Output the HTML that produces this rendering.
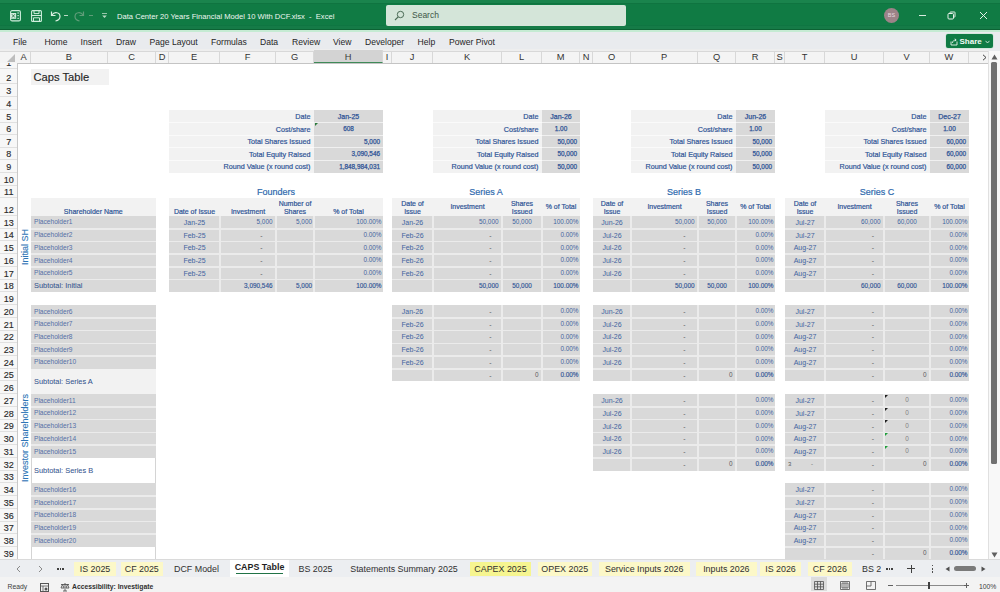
<!DOCTYPE html>
<html><head><meta charset="utf-8">
<style>
*{margin:0;padding:0;box-sizing:border-box}
html,body{width:1000px;height:592px;overflow:hidden;background:#fff;font-family:"Liberation Sans",sans-serif}
.a{position:absolute}
.t{position:absolute;display:flex;align-items:center;font-size:7px;color:#2f5496;white-space:nowrap;line-height:1;overflow:visible}
.t.g{color:#595959}
.t.g2{color:#7f7f7f}
.t.ph{color:#5470a6}
.t.sb{color:#34558f;-webkit-text-stroke:0.05px #34558f}
.t.hd{text-align:center;line-height:8.2px;-webkit-text-stroke:0.2px #2f5496}
.t.lb{-webkit-text-stroke:0.2px #2f5496}
.t.v{-webkit-text-stroke:0.25px #2f5496}
.t.b{-webkit-text-stroke:0.15px #2f5496}
.t.d{color:#4264a0}
.tt{position:absolute;display:flex;align-items:center;font-size:9px;color:#2f6aae;white-space:nowrap;-webkit-text-stroke:0.2px #2f6aae}
.cap{position:absolute;font-size:11.2px;color:#262626;line-height:15px;white-space:nowrap;margin-top:0px;-webkit-text-stroke:0.15px #262626}
.rot{position:absolute;display:flex;align-items:center;justify-content:center}
.rot span{display:block;transform:rotate(-90deg);white-space:nowrap;font-size:9px;color:#2e75b6;-webkit-text-stroke:0.1px #2e75b6}
#title{position:absolute;left:0;top:0;width:1000px;height:31.5px;background:linear-gradient(180deg,#1a844d 0,#1a844d 3px,#0f7440 3px,#0f7440 4.5px,#107b44 4.5px,#107b44 25px,#0c7340 25px,#157b47 26.5px,#157b47 29px,#0c6334 29.5px,#0c6334 30.5px,#c5ebd3 30.5px)}
#menu{position:absolute;left:0;top:31.5px;width:1000px;height:19.5px;background:#e9ebee}
.mi{position:absolute;top:1.5px;height:19.5px;line-height:19.5px;font-size:8.6px;color:#262626;white-space:nowrap}
#colhdr{position:absolute;left:0;top:48.5px;width:988px;height:15px;background:linear-gradient(180deg,#eeeeee 0,#eeeeee 2px,#d8d8d8 2px,#d8d8d8 3px,#f4f4f4 3px);border-bottom:1px solid #c4c4c4}
.cn{position:absolute;top:3px;height:11px;line-height:11px;text-align:center;font-size:9.3px;color:#333;border-right:1px solid #d8d8d8}
.cn.sel{background:#d3d3d3;border-bottom:1.5px solid #3f8a58;color:#3a3a3a;top:1.5px;height:12.5px;line-height:14px}
#rowhdr{position:absolute;left:0;top:63px;width:17.5px;height:497px;background:#f7f7f7;border-right:1px solid #c8c8c8}
.rn{position:absolute;left:0;margin-top:-63px;overflow:hidden;width:16.5px;font-size:9px;line-height:9px;color:#2b2b2b;-webkit-text-stroke:0.15px #2b2b2b;border-bottom:1px solid #e0e0e0;display:flex;align-items:flex-end;justify-content:center;padding-left:1px}
#vscroll{position:absolute;left:988px;top:50.5px;width:12px;height:509px;background:#f8f8f8;border-left:1px solid #e0e0e0}
#tabs{position:absolute;left:0;top:558.5px;width:1000px;height:18px;background:#eceef1;border-top:1px solid #dadada}
.tab{position:absolute;top:2px;height:14px;line-height:14px;font-size:8.9px;color:#303030;white-space:nowrap;text-align:center}
.tab.y{background:#fcf8c8}
.tab.yy{background:#f6f590}
#status{position:absolute;left:0;top:576.5px;width:1000px;height:15.5px;background:#f3f3f3}
.st{position:absolute;top:3px;height:14.5px;line-height:14.5px;font-size:6.8px;color:#404040;white-space:nowrap}
</style></head><body>
<div id="title">
  <svg style="position:absolute;left:10px;top:10px" width="11" height="11.5" viewBox="0 0 11 11.5">
    <rect x="0.6" y="0.6" width="9.8" height="10.3" rx="1.5" fill="none" stroke="#cfeedd" stroke-width="1.1"/>
    <rect x="0.6" y="3" width="5.6" height="5.8" fill="#cfeedd"/>
    <path d="M2 4.3 L4.8 7.5 M4.8 4.3 L2 7.5" stroke="#2c6e46" stroke-width="0.9"/>
    <path d="M7.3 3 H9 M7.3 5.7 H9 M7.3 8.3 H9" stroke="#cfeedd" stroke-width="1"/>
  </svg>
  <svg style="position:absolute;left:31px;top:9.5px" width="11" height="12" viewBox="0 0 11 12">
    <rect x="0.6" y="0.6" width="9.8" height="10.8" rx="1" fill="none" stroke="#cfeedd" stroke-width="1.1"/>
    <path d="M0.6 5.5 H10.4 M3 0.6 V3.6 H8 V0.6 M2.5 11.4 V7.8 H8.5 V11.4" fill="none" stroke="#cfeedd" stroke-width="1"/>
  </svg>
  <svg style="position:absolute;left:49px;top:9px" width="13" height="13" viewBox="0 0 13 13">
    <path d="M2.5 2.5 V6.5 H6.5" fill="none" stroke="#d9efe0" stroke-width="1.2"/>
    <path d="M3 6 C5 2.5 11 3 11 7.5 C11 10 9 11.5 6.5 12" fill="none" stroke="#d9efe0" stroke-width="1.2"/>
  </svg>
  <div style="position:absolute;left:64px;top:15px;width:4px;height:1px;background:#b9d9c4"></div>
  <svg style="position:absolute;left:73px;top:9px" width="13" height="13" viewBox="0 0 13 13">
    <path d="M10.5 2.5 V6.5 H6.5" fill="none" stroke="#5f9c78" stroke-width="1.2"/>
    <path d="M10 6 C8 2.5 2 3 2 7.5 C2 10 4 11.5 6.5 12" fill="none" stroke="#5f9c78" stroke-width="1.2"/>
  </svg>
  <div style="position:absolute;left:89px;top:15px;width:4px;height:1px;background:#5f9c78"></div>
  <svg style="position:absolute;left:101px;top:12px" width="7" height="7" viewBox="0 0 7 7">
    <path d="M1 1.5 H6" stroke="#b9d9c4" stroke-width="0.8"/><path d="M1.2 3.5 L3.5 6 L5.8 3.5 Z" fill="#b9d9c4"/>
  </svg>
  <div style="position:absolute;left:117px;top:9.7px;height:13px;line-height:13px;font-size:7.6px;color:#eef7f1;white-space:nowrap">Data Center 20 Years Financial Model 10 With DCF.xlsx&nbsp; -&nbsp; Excel</div>
  <div style="position:absolute;left:385.5px;top:5px;width:240px;height:21px;background:#d4e5d9;border-radius:2px"></div>
  <svg style="position:absolute;left:394px;top:10px" width="11" height="11" viewBox="0 0 11 11">
    <circle cx="6.5" cy="4.5" r="3.2" fill="none" stroke="#4a6b55" stroke-width="1"/>
    <path d="M4.2 6.8 L1 10" stroke="#4a6b55" stroke-width="1.1"/>
  </svg>
  <div style="position:absolute;left:412px;top:9px;height:13px;line-height:13px;font-size:8.5px;color:#3d5747">Search</div>
  <div style="position:absolute;left:884px;top:8px;width:15px;height:15px;border-radius:50%;background:#9c8388"></div>
  <div style="position:absolute;left:884px;top:8px;width:15px;height:15px;line-height:15px;text-align:center;font-size:5.5px;color:#e8dde0">BS</div>
  <div style="position:absolute;left:918.5px;top:15px;width:7px;height:1px;background:#d8ebdf"></div>
  <svg style="position:absolute;left:947px;top:11px" width="9" height="9" viewBox="0 0 9 9">
    <rect x="1" y="2.5" width="5.5" height="5.5" rx="1" fill="none" stroke="#e6f2ea" stroke-width="1"/>
    <path d="M3 2.5 V1.5 Q3 1 3.5 1 H7.5 Q8 1 8 1.5 V5.5 Q8 6 7.5 6 H6.5" fill="none" stroke="#e6f2ea" stroke-width="1"/>
  </svg>
  <svg style="position:absolute;left:979px;top:11px" width="9" height="9" viewBox="0 0 9 9">
    <path d="M1 1 L8 8 M8 1 L1 8" stroke="#e6f2ea" stroke-width="1"/>
  </svg>
</div>
<div id="menu">
  <div class="mi" style="left:13px">File</div>
  <div class="mi" style="left:44.5px">Home</div>
  <div class="mi" style="left:80.5px">Insert</div>
  <div class="mi" style="left:116px">Draw</div>
  <div class="mi" style="left:149.5px">Page Layout</div>
  <div class="mi" style="left:211px">Formulas</div>
  <div class="mi" style="left:260px">Data</div>
  <div class="mi" style="left:292px">Review</div>
  <div class="mi" style="left:333px">View</div>
  <div class="mi" style="left:365px">Developer</div>
  <div class="mi" style="left:417.5px">Help</div>
  <div class="mi" style="left:449px">Power Pivot</div>
  <div style="position:absolute;left:946px;top:2px;width:46.5px;height:14.5px;background:#0f7b44;border-radius:2px;box-shadow:0 0 0 0.5px #bfe5cc"></div>
  <svg style="position:absolute;left:950px;top:6px" width="8" height="8" viewBox="0 0 8 8">
    <path d="M1 3.5 V7 H7 V3.5" fill="none" stroke="#e8f3ec" stroke-width="0.9"/>
    <path d="M2.5 5 C2.5 3 4 2 6 2 M4.8 0.8 L6.2 2 L4.8 3.2" fill="none" stroke="#e8f3ec" stroke-width="0.9"/>
  </svg>
  <div style="position:absolute;left:959.5px;top:2px;height:15px;line-height:15px;font-size:8px;font-weight:bold;color:#f4fbf6">Share</div>
  <svg style="position:absolute;left:985px;top:8px" width="5" height="4" viewBox="0 0 5 4"><path d="M0.5 0.8 L2.5 3 L4.5 0.8" fill="none" stroke="#e8f3ec" stroke-width="0.8"/></svg>
</div>
<div id="grid" style="position:absolute;left:0;top:0;width:1000px;height:592px">
<div class="a" style="left:169.00px;top:110.00px;width:145.00px;height:62.50px;background:#f2f2f2"></div>
<div class="a" style="left:314.00px;top:110.00px;width:69.00px;height:62.50px;background:#d9d9d9"></div>
<div class="t lb" style="left:169.00px;top:110.60px;width:145.00px;height:12.50px;justify-content:flex-end;padding-right:3.5px;font-size:7.2px;">Date</div>
<div class="t v" style="left:314.00px;top:110.60px;width:69.00px;height:12.50px;justify-content:center;font-size:7px;">Jan-25</div>
<div class="a" style="left:169.00px;top:122.00px;width:214.00px;height:1.00px;background:#ffffff;opacity:.6"></div>
<div class="t lb" style="left:169.00px;top:123.10px;width:145.00px;height:12.50px;justify-content:flex-end;padding-right:3.5px;font-size:7.2px;">Cost/share</div>
<div class="t v" style="left:314.00px;top:123.10px;width:69.00px;height:12.50px;justify-content:center;font-size:6.4px;">608</div>
<div class="a" style="left:169.00px;top:134.50px;width:214.00px;height:1.00px;background:#ffffff;opacity:.6"></div>
<div class="t lb" style="left:169.00px;top:135.60px;width:145.00px;height:12.50px;justify-content:flex-end;padding-right:3.5px;font-size:7.2px;">Total Shares Issued</div>
<div class="t v" style="left:314.00px;top:135.60px;width:69.00px;height:12.50px;justify-content:flex-end;padding-right:3px;font-size:6.4px;">5,000</div>
<div class="a" style="left:169.00px;top:147.00px;width:214.00px;height:1.00px;background:#ffffff;opacity:.6"></div>
<div class="t lb" style="left:169.00px;top:148.10px;width:145.00px;height:12.50px;justify-content:flex-end;padding-right:3.5px;font-size:7.2px;">Total Equity Raised</div>
<div class="t v" style="left:314.00px;top:148.10px;width:69.00px;height:12.50px;justify-content:flex-end;padding-right:3px;font-size:6.4px;">3,090,546</div>
<div class="a" style="left:169.00px;top:159.50px;width:214.00px;height:1.00px;background:#ffffff;opacity:.6"></div>
<div class="t lb" style="left:169.00px;top:160.60px;width:145.00px;height:12.50px;justify-content:flex-end;padding-right:3.5px;font-size:7.2px;">Round Value (x round cost)</div>
<div class="t v" style="left:314.00px;top:160.60px;width:69.00px;height:12.50px;justify-content:flex-end;padding-right:3px;font-size:6.4px;">1,848,984,031</div>
<div class="a" style="left:433.00px;top:110.00px;width:109.00px;height:62.50px;background:#f2f2f2"></div>
<div class="a" style="left:542.00px;top:110.00px;width:38.00px;height:62.50px;background:#d9d9d9"></div>
<div class="t lb" style="left:433.00px;top:110.60px;width:109.00px;height:12.50px;justify-content:flex-end;padding-right:3.5px;font-size:7.2px;">Date</div>
<div class="t v" style="left:542.00px;top:110.60px;width:38.00px;height:12.50px;justify-content:center;font-size:7px;">Jan-26</div>
<div class="a" style="left:433.00px;top:122.00px;width:147.00px;height:1.00px;background:#ffffff;opacity:.6"></div>
<div class="t lb" style="left:433.00px;top:123.10px;width:109.00px;height:12.50px;justify-content:flex-end;padding-right:3.5px;font-size:7.2px;">Cost/share</div>
<div class="t v" style="left:542.00px;top:123.10px;width:38.00px;height:12.50px;justify-content:center;font-size:6.4px;">1.00</div>
<div class="a" style="left:433.00px;top:134.50px;width:147.00px;height:1.00px;background:#ffffff;opacity:.6"></div>
<div class="t lb" style="left:433.00px;top:135.60px;width:109.00px;height:12.50px;justify-content:flex-end;padding-right:3.5px;font-size:7.2px;">Total Shares Issued</div>
<div class="t v" style="left:542.00px;top:135.60px;width:38.00px;height:12.50px;justify-content:flex-end;padding-right:3px;font-size:6.4px;">50,000</div>
<div class="a" style="left:433.00px;top:147.00px;width:147.00px;height:1.00px;background:#ffffff;opacity:.6"></div>
<div class="t lb" style="left:433.00px;top:148.10px;width:109.00px;height:12.50px;justify-content:flex-end;padding-right:3.5px;font-size:7.2px;">Total Equity Raised</div>
<div class="t v" style="left:542.00px;top:148.10px;width:38.00px;height:12.50px;justify-content:flex-end;padding-right:3px;font-size:6.4px;">50,000</div>
<div class="a" style="left:433.00px;top:159.50px;width:147.00px;height:1.00px;background:#ffffff;opacity:.6"></div>
<div class="t lb" style="left:433.00px;top:160.60px;width:109.00px;height:12.50px;justify-content:flex-end;padding-right:3.5px;font-size:7.2px;">Round Value (x round cost)</div>
<div class="t v" style="left:542.00px;top:160.60px;width:38.00px;height:12.50px;justify-content:flex-end;padding-right:3px;font-size:6.4px;">50,000</div>
<div class="a" style="left:631.00px;top:110.00px;width:105.00px;height:62.50px;background:#f2f2f2"></div>
<div class="a" style="left:736.00px;top:110.00px;width:39.00px;height:62.50px;background:#d9d9d9"></div>
<div class="t lb" style="left:631.00px;top:110.60px;width:105.00px;height:12.50px;justify-content:flex-end;padding-right:3.5px;font-size:7.2px;">Date</div>
<div class="t v" style="left:736.00px;top:110.60px;width:39.00px;height:12.50px;justify-content:center;font-size:7px;">Jun-26</div>
<div class="a" style="left:631.00px;top:122.00px;width:144.00px;height:1.00px;background:#ffffff;opacity:.6"></div>
<div class="t lb" style="left:631.00px;top:123.10px;width:105.00px;height:12.50px;justify-content:flex-end;padding-right:3.5px;font-size:7.2px;">Cost/share</div>
<div class="t v" style="left:736.00px;top:123.10px;width:39.00px;height:12.50px;justify-content:center;font-size:6.4px;">1.00</div>
<div class="a" style="left:631.00px;top:134.50px;width:144.00px;height:1.00px;background:#ffffff;opacity:.6"></div>
<div class="t lb" style="left:631.00px;top:135.60px;width:105.00px;height:12.50px;justify-content:flex-end;padding-right:3.5px;font-size:7.2px;">Total Shares Issued</div>
<div class="t v" style="left:736.00px;top:135.60px;width:39.00px;height:12.50px;justify-content:flex-end;padding-right:3px;font-size:6.4px;">50,000</div>
<div class="a" style="left:631.00px;top:147.00px;width:144.00px;height:1.00px;background:#ffffff;opacity:.6"></div>
<div class="t lb" style="left:631.00px;top:148.10px;width:105.00px;height:12.50px;justify-content:flex-end;padding-right:3.5px;font-size:7.2px;">Total Equity Raised</div>
<div class="t v" style="left:736.00px;top:148.10px;width:39.00px;height:12.50px;justify-content:flex-end;padding-right:3px;font-size:6.4px;">50,000</div>
<div class="a" style="left:631.00px;top:159.50px;width:144.00px;height:1.00px;background:#ffffff;opacity:.6"></div>
<div class="t lb" style="left:631.00px;top:160.60px;width:105.00px;height:12.50px;justify-content:flex-end;padding-right:3.5px;font-size:7.2px;">Round Value (x round cost)</div>
<div class="t v" style="left:736.00px;top:160.60px;width:39.00px;height:12.50px;justify-content:flex-end;padding-right:3px;font-size:6.4px;">50,000</div>
<div class="a" style="left:825.00px;top:110.00px;width:105.00px;height:62.50px;background:#f2f2f2"></div>
<div class="a" style="left:930.00px;top:110.00px;width:39.00px;height:62.50px;background:#d9d9d9"></div>
<div class="t lb" style="left:825.00px;top:110.60px;width:105.00px;height:12.50px;justify-content:flex-end;padding-right:3.5px;font-size:7.2px;">Date</div>
<div class="t v" style="left:930.00px;top:110.60px;width:39.00px;height:12.50px;justify-content:center;font-size:7px;">Dec-27</div>
<div class="a" style="left:825.00px;top:122.00px;width:144.00px;height:1.00px;background:#ffffff;opacity:.6"></div>
<div class="t lb" style="left:825.00px;top:123.10px;width:105.00px;height:12.50px;justify-content:flex-end;padding-right:3.5px;font-size:7.2px;">Cost/share</div>
<div class="t v" style="left:930.00px;top:123.10px;width:39.00px;height:12.50px;justify-content:center;font-size:6.4px;">1.00</div>
<div class="a" style="left:825.00px;top:134.50px;width:144.00px;height:1.00px;background:#ffffff;opacity:.6"></div>
<div class="t lb" style="left:825.00px;top:135.60px;width:105.00px;height:12.50px;justify-content:flex-end;padding-right:3.5px;font-size:7.2px;">Total Shares Issued</div>
<div class="t v" style="left:930.00px;top:135.60px;width:39.00px;height:12.50px;justify-content:flex-end;padding-right:3px;font-size:6.4px;">60,000</div>
<div class="a" style="left:825.00px;top:147.00px;width:144.00px;height:1.00px;background:#ffffff;opacity:.6"></div>
<div class="t lb" style="left:825.00px;top:148.10px;width:105.00px;height:12.50px;justify-content:flex-end;padding-right:3.5px;font-size:7.2px;">Total Equity Raised</div>
<div class="t v" style="left:930.00px;top:148.10px;width:39.00px;height:12.50px;justify-content:flex-end;padding-right:3px;font-size:6.4px;">60,000</div>
<div class="a" style="left:825.00px;top:159.50px;width:144.00px;height:1.00px;background:#ffffff;opacity:.6"></div>
<div class="t lb" style="left:825.00px;top:160.60px;width:105.00px;height:12.50px;justify-content:flex-end;padding-right:3.5px;font-size:7.2px;">Round Value (x round cost)</div>
<div class="t v" style="left:930.00px;top:160.60px;width:39.00px;height:12.50px;justify-content:flex-end;padding-right:3px;font-size:6.4px;">60,000</div>
<svg class="a" style="left:314.50px;top:123.00px" width="3" height="3" viewBox="0 0 3 3"><path d="M0 0 H3 L0 3 Z" fill="#2a7a3a"/></svg>
<div class="tt" style="left:169.00px;top:186.00px;width:214.00px;height:12.80px;justify-content:center;">Founders</div>
<div class="tt" style="left:392.00px;top:186.00px;width:188.00px;height:12.80px;justify-content:center;">Series A</div>
<div class="tt" style="left:593.00px;top:186.00px;width:182.00px;height:12.80px;justify-content:center;">Series B</div>
<div class="tt" style="left:785.00px;top:186.00px;width:184.00px;height:12.80px;justify-content:center;">Series C</div>
<div class="a" style="left:30.50px;top:198.30px;width:125.50px;height:17.70px;background:#f2f2f2"></div>
<div class="t" style="left:30.5px;top:198.3px;width:125.5px;height:17.70px;justify-content:center;align-items:flex-end;padding-bottom:0.5px;-webkit-text-stroke:0.2px #2f5496">Shareholder Name</div>
<div class="a" style="left:30.50px;top:216.00px;width:125.50px;height:63.65px;background:#d9d9d9"></div>
<div class="t ph" style="left:30.50px;top:216.40px;width:125.50px;height:12.73px;justify-content:flex-start;padding-left:3.5px;font-size:6.6px;">Placeholder1</div>
<div class="a" style="left:30.50px;top:227.93px;width:125.50px;height:1.60px;background:#ebebeb"></div>
<div class="t ph" style="left:30.50px;top:229.13px;width:125.50px;height:12.73px;justify-content:flex-start;padding-left:3.5px;font-size:6.6px;">Placeholder2</div>
<div class="a" style="left:30.50px;top:240.66px;width:125.50px;height:1.60px;background:#ebebeb"></div>
<div class="t ph" style="left:30.50px;top:241.86px;width:125.50px;height:12.73px;justify-content:flex-start;padding-left:3.5px;font-size:6.6px;">Placeholder3</div>
<div class="a" style="left:30.50px;top:253.39px;width:125.50px;height:1.60px;background:#ebebeb"></div>
<div class="t ph" style="left:30.50px;top:254.59px;width:125.50px;height:12.73px;justify-content:flex-start;padding-left:3.5px;font-size:6.6px;">Placeholder4</div>
<div class="a" style="left:30.50px;top:266.12px;width:125.50px;height:1.60px;background:#ebebeb"></div>
<div class="t ph" style="left:30.50px;top:267.32px;width:125.50px;height:12.73px;justify-content:flex-start;padding-left:3.5px;font-size:6.6px;">Placeholder5</div>
<div class="a" style="left:30.50px;top:279.65px;width:125.50px;height:12.73px;background:#d9d9d9"></div>
<div class="a" style="left:30.50px;top:278.85px;width:125.50px;height:1.60px;background:#ebebeb"></div>
<div class="t sb" style="left:30.50px;top:279.65px;width:125.50px;height:12.73px;justify-content:flex-start;padding-left:3.5px;font-size:7.4px;">Subtotal: Initial</div>
<div class="a" style="left:30.50px;top:305.11px;width:125.50px;height:63.65px;background:#d9d9d9"></div>
<div class="t ph" style="left:30.50px;top:305.51px;width:125.50px;height:12.73px;justify-content:flex-start;padding-left:3.5px;font-size:6.6px;">Placeholder6</div>
<div class="a" style="left:30.50px;top:317.04px;width:125.50px;height:1.60px;background:#ebebeb"></div>
<div class="t ph" style="left:30.50px;top:318.24px;width:125.50px;height:12.73px;justify-content:flex-start;padding-left:3.5px;font-size:6.6px;">Placeholder7</div>
<div class="a" style="left:30.50px;top:329.77px;width:125.50px;height:1.60px;background:#ebebeb"></div>
<div class="t ph" style="left:30.50px;top:330.97px;width:125.50px;height:12.73px;justify-content:flex-start;padding-left:3.5px;font-size:6.6px;">Placeholder8</div>
<div class="a" style="left:30.50px;top:342.50px;width:125.50px;height:1.60px;background:#ebebeb"></div>
<div class="t ph" style="left:30.50px;top:343.70px;width:125.50px;height:12.73px;justify-content:flex-start;padding-left:3.5px;font-size:6.6px;">Placeholder9</div>
<div class="a" style="left:30.50px;top:355.23px;width:125.50px;height:1.60px;background:#ebebeb"></div>
<div class="t ph" style="left:30.50px;top:356.43px;width:125.50px;height:12.73px;justify-content:flex-start;padding-left:3.5px;font-size:6.6px;">Placeholder10</div>
<div class="a" style="left:30.50px;top:368.76px;width:125.50px;height:25.46px;background:#f2f2f2"></div>
<div class="t sb" style="left:30.50px;top:368.76px;width:125.50px;height:25.46px;justify-content:flex-start;padding-left:3.5px;font-size:7.4px;">Subtotal: Series A</div>
<div class="a" style="left:30.50px;top:394.22px;width:125.50px;height:63.65px;background:#d9d9d9"></div>
<div class="t ph" style="left:30.50px;top:394.62px;width:125.50px;height:12.73px;justify-content:flex-start;padding-left:3.5px;font-size:6.6px;">Placeholder11</div>
<div class="a" style="left:30.50px;top:406.15px;width:125.50px;height:1.60px;background:#ebebeb"></div>
<div class="t ph" style="left:30.50px;top:407.35px;width:125.50px;height:12.73px;justify-content:flex-start;padding-left:3.5px;font-size:6.6px;">Placeholder12</div>
<div class="a" style="left:30.50px;top:418.88px;width:125.50px;height:1.60px;background:#ebebeb"></div>
<div class="t ph" style="left:30.50px;top:420.08px;width:125.50px;height:12.73px;justify-content:flex-start;padding-left:3.5px;font-size:6.6px;">Placeholder13</div>
<div class="a" style="left:30.50px;top:431.61px;width:125.50px;height:1.60px;background:#ebebeb"></div>
<div class="t ph" style="left:30.50px;top:432.81px;width:125.50px;height:12.73px;justify-content:flex-start;padding-left:3.5px;font-size:6.6px;">Placeholder14</div>
<div class="a" style="left:30.50px;top:444.34px;width:125.50px;height:1.60px;background:#ebebeb"></div>
<div class="t ph" style="left:30.50px;top:445.54px;width:125.50px;height:12.73px;justify-content:flex-start;padding-left:3.5px;font-size:6.6px;">Placeholder15</div>
<div class="a" style="left:30.50px;top:457.87px;width:125.50px;height:25.46px;background:#ffffff;border-left:1px solid #d4d4d4;border-right:1px solid #d4d4d4"></div>
<div class="t sb" style="left:30.50px;top:457.87px;width:125.50px;height:25.46px;justify-content:flex-start;padding-left:3.5px;font-size:7.4px;">Subtotal: Series B</div>
<div class="a" style="left:30.50px;top:483.33px;width:125.50px;height:63.65px;background:#d9d9d9"></div>
<div class="t ph" style="left:30.50px;top:483.73px;width:125.50px;height:12.73px;justify-content:flex-start;padding-left:3.5px;font-size:6.6px;">Placeholder16</div>
<div class="a" style="left:30.50px;top:495.26px;width:125.50px;height:1.60px;background:#ebebeb"></div>
<div class="t ph" style="left:30.50px;top:496.46px;width:125.50px;height:12.73px;justify-content:flex-start;padding-left:3.5px;font-size:6.6px;">Placeholder17</div>
<div class="a" style="left:30.50px;top:507.99px;width:125.50px;height:1.60px;background:#ebebeb"></div>
<div class="t ph" style="left:30.50px;top:509.19px;width:125.50px;height:12.73px;justify-content:flex-start;padding-left:3.5px;font-size:6.6px;">Placeholder18</div>
<div class="a" style="left:30.50px;top:520.72px;width:125.50px;height:1.60px;background:#ebebeb"></div>
<div class="t ph" style="left:30.50px;top:521.92px;width:125.50px;height:12.73px;justify-content:flex-start;padding-left:3.5px;font-size:6.6px;">Placeholder19</div>
<div class="a" style="left:30.50px;top:533.45px;width:125.50px;height:1.60px;background:#ebebeb"></div>
<div class="t ph" style="left:30.50px;top:534.65px;width:125.50px;height:12.73px;justify-content:flex-start;padding-left:3.5px;font-size:6.6px;">Placeholder20</div>
<div class="a" style="left:30.50px;top:546.98px;width:125.50px;height:13.02px;background:#ffffff;border-left:1px solid #d4d4d4;border-right:1px solid #d4d4d4"></div>
<div class="rot" style="left:18.0px;top:200.3px;width:13.0px;height:94.07999999999998px"><span>Initial SH</span></div>
<div class="rot" style="left:19.0px;top:398px;width:13.0px;height:80px"><span>Investor Shareholders</span></div>
<div class="a" style="left:169.00px;top:198.30px;width:214.00px;height:17.70px;background:#f2f2f2"></div>
<div class="t hd" style="left:169px;top:198.30px;width:51px;height:17.70px;justify-content:center;align-items:flex-end;padding-bottom:-0.5px">Date of Issue</div>
<div class="t hd" style="left:220px;top:198.30px;width:56px;height:17.70px;justify-content:center;align-items:flex-end;padding-bottom:-0.5px">Investment</div>
<div class="t hd" style="left:276px;top:198.30px;width:38px;height:17.70px;justify-content:center;align-items:flex-end;padding-bottom:-0.5px">Number of<br>Shares</div>
<div class="t hd" style="left:314px;top:198.30px;width:69px;height:17.70px;justify-content:center;align-items:flex-end;padding-bottom:-0.5px">% of Total</div>
<div class="a" style="left:392.00px;top:198.30px;width:188.00px;height:17.70px;background:#f2f2f2"></div>
<div class="t hd" style="left:392px;top:198.30px;width:41px;height:17.70px;justify-content:center;align-items:flex-end;padding-bottom:-0.5px">Date of<br>Issue</div>
<div class="t hd" style="left:433px;top:198.30px;width:69px;height:17.70px;justify-content:center;align-items:center;padding-bottom:-1px">Investment</div>
<div class="t hd" style="left:502px;top:198.30px;width:40px;height:17.70px;justify-content:center;align-items:flex-end;padding-bottom:-0.5px">Shares<br>Issued</div>
<div class="t hd" style="left:542px;top:198.30px;width:38px;height:17.70px;justify-content:center;align-items:center;padding-bottom:-1px">% of Total</div>
<div class="a" style="left:593.00px;top:198.30px;width:182.00px;height:17.70px;background:#f2f2f2"></div>
<div class="t hd" style="left:593px;top:198.30px;width:38px;height:17.70px;justify-content:center;align-items:flex-end;padding-bottom:-0.5px">Date of<br>Issue</div>
<div class="t hd" style="left:631px;top:198.30px;width:67px;height:17.70px;justify-content:center;align-items:center;padding-bottom:-1px">Investment</div>
<div class="t hd" style="left:698px;top:198.30px;width:38px;height:17.70px;justify-content:center;align-items:flex-end;padding-bottom:-0.5px">Shares<br>Issued</div>
<div class="t hd" style="left:736px;top:198.30px;width:39px;height:17.70px;justify-content:center;align-items:center;padding-bottom:-1px">% of Total</div>
<div class="a" style="left:785.00px;top:198.30px;width:184.00px;height:17.70px;background:#f2f2f2"></div>
<div class="t hd" style="left:785px;top:198.30px;width:40px;height:17.70px;justify-content:center;align-items:flex-end;padding-bottom:-0.5px">Date of<br>Issue</div>
<div class="t hd" style="left:825px;top:198.30px;width:59px;height:17.70px;justify-content:center;align-items:center;padding-bottom:-1px">Investment</div>
<div class="t hd" style="left:884px;top:198.30px;width:46px;height:17.70px;justify-content:center;align-items:flex-end;padding-bottom:-0.5px">Shares<br>Issued</div>
<div class="t hd" style="left:930px;top:198.30px;width:39px;height:17.70px;justify-content:center;align-items:center;padding-bottom:-1px">% of Total</div>
<div class="a" style="left:169.00px;top:216.00px;width:214.00px;height:76.38px;background:#d9d9d9"></div>
<div class="a" style="left:169.00px;top:227.93px;width:214.00px;height:1.60px;background:#ebebeb"></div>
<div class="a" style="left:169.00px;top:240.66px;width:214.00px;height:1.60px;background:#ebebeb"></div>
<div class="a" style="left:169.00px;top:253.39px;width:214.00px;height:1.60px;background:#ebebeb"></div>
<div class="a" style="left:169.00px;top:266.12px;width:214.00px;height:1.60px;background:#ebebeb"></div>
<div class="a" style="left:169.00px;top:278.85px;width:214.00px;height:1.60px;background:#ebebeb"></div>
<div class="a" style="left:219.20px;top:216.00px;width:1.60px;height:76.38px;background:#ebebeb"></div>
<div class="a" style="left:275.20px;top:216.00px;width:1.60px;height:76.38px;background:#ebebeb"></div>
<div class="a" style="left:313.20px;top:216.00px;width:1.60px;height:76.38px;background:#ebebeb"></div>
<div class="t d" style="left:169.00px;top:216.00px;width:51.00px;height:12.73px;justify-content:center;font-size:7.0px;">Jan-25</div>
<div class="t d" style="left:220.00px;top:216.00px;width:56.00px;height:12.73px;justify-content:flex-end;padding-right:3.5px;font-size:6.4px;">5,000</div>
<div class="t d" style="left:276.00px;top:216.00px;width:38.00px;height:12.73px;justify-content:flex-end;padding-right:2px;font-size:6.4px;">5,000</div>
<div class="t d" style="left:314.00px;top:216.00px;width:69.00px;height:12.73px;justify-content:flex-end;padding-right:1.5px;font-size:6.4px;">100.00%</div>
<div class="t d" style="left:169.00px;top:228.73px;width:51.00px;height:12.73px;justify-content:center;font-size:7.0px;">Feb-25</div>
<div class="t g" style="left:220.00px;top:228.73px;width:56.00px;height:12.73px;justify-content:flex-end;padding-right:13.5px;font-size:7px;">-</div>
<div class="t d" style="left:314.00px;top:228.73px;width:69.00px;height:12.73px;justify-content:flex-end;padding-right:1.5px;font-size:6.4px;">0.00%</div>
<div class="t d" style="left:169.00px;top:241.46px;width:51.00px;height:12.73px;justify-content:center;font-size:7.0px;">Feb-25</div>
<div class="t g" style="left:220.00px;top:241.46px;width:56.00px;height:12.73px;justify-content:flex-end;padding-right:13.5px;font-size:7px;">-</div>
<div class="t d" style="left:314.00px;top:241.46px;width:69.00px;height:12.73px;justify-content:flex-end;padding-right:1.5px;font-size:6.4px;">0.00%</div>
<div class="t d" style="left:169.00px;top:254.19px;width:51.00px;height:12.73px;justify-content:center;font-size:7.0px;">Feb-25</div>
<div class="t g" style="left:220.00px;top:254.19px;width:56.00px;height:12.73px;justify-content:flex-end;padding-right:13.5px;font-size:7px;">-</div>
<div class="t d" style="left:314.00px;top:254.19px;width:69.00px;height:12.73px;justify-content:flex-end;padding-right:1.5px;font-size:6.4px;">0.00%</div>
<div class="t d" style="left:169.00px;top:266.92px;width:51.00px;height:12.73px;justify-content:center;font-size:7.0px;">Feb-25</div>
<div class="t g" style="left:220.00px;top:266.92px;width:56.00px;height:12.73px;justify-content:flex-end;padding-right:13.5px;font-size:7px;">-</div>
<div class="t d" style="left:314.00px;top:266.92px;width:69.00px;height:12.73px;justify-content:flex-end;padding-right:1.5px;font-size:6.4px;">0.00%</div>
<div class="t b" style="left:220.00px;top:279.65px;width:56.00px;height:12.73px;justify-content:flex-end;padding-right:3.5px;font-size:6.4px;">3,090,546</div>
<div class="t b" style="left:276.00px;top:279.65px;width:38.00px;height:12.73px;justify-content:flex-end;padding-right:2px;font-size:6.4px;">5,000</div>
<div class="t b" style="left:314.00px;top:279.65px;width:69.00px;height:12.73px;justify-content:flex-end;padding-right:1.5px;font-size:6.4px;">100.00%</div>
<div class="a" style="left:392.00px;top:216.00px;width:188.00px;height:76.38px;background:#d9d9d9"></div>
<div class="a" style="left:392.00px;top:227.93px;width:188.00px;height:1.60px;background:#ebebeb"></div>
<div class="a" style="left:392.00px;top:240.66px;width:188.00px;height:1.60px;background:#ebebeb"></div>
<div class="a" style="left:392.00px;top:253.39px;width:188.00px;height:1.60px;background:#ebebeb"></div>
<div class="a" style="left:392.00px;top:266.12px;width:188.00px;height:1.60px;background:#ebebeb"></div>
<div class="a" style="left:392.00px;top:278.85px;width:188.00px;height:1.60px;background:#ebebeb"></div>
<div class="a" style="left:432.20px;top:216.00px;width:1.60px;height:76.38px;background:#ebebeb"></div>
<div class="a" style="left:501.20px;top:216.00px;width:1.60px;height:76.38px;background:#ebebeb"></div>
<div class="a" style="left:541.20px;top:216.00px;width:1.60px;height:76.38px;background:#ebebeb"></div>
<div class="t d" style="left:392.00px;top:216.00px;width:41.00px;height:12.73px;justify-content:center;font-size:7.0px;">Jan-26</div>
<div class="t d" style="left:433.00px;top:216.00px;width:69.00px;height:12.73px;justify-content:flex-end;padding-right:3.5px;font-size:6.4px;">50,000</div>
<div class="t d" style="left:502.00px;top:216.00px;width:40.00px;height:12.73px;justify-content:center;font-size:6.4px;">50,000</div>
<div class="t d" style="left:542.00px;top:216.00px;width:38.00px;height:12.73px;justify-content:flex-end;padding-right:1.5px;font-size:6.4px;">100.00%</div>
<div class="t d" style="left:392.00px;top:228.73px;width:41.00px;height:12.73px;justify-content:center;font-size:7.0px;">Feb-26</div>
<div class="t g" style="left:433.00px;top:228.73px;width:69.00px;height:12.73px;justify-content:flex-end;padding-right:10.5px;font-size:7px;">-</div>
<div class="t d" style="left:542.00px;top:228.73px;width:38.00px;height:12.73px;justify-content:flex-end;padding-right:1.5px;font-size:6.4px;">0.00%</div>
<div class="t d" style="left:392.00px;top:241.46px;width:41.00px;height:12.73px;justify-content:center;font-size:7.0px;">Feb-26</div>
<div class="t g" style="left:433.00px;top:241.46px;width:69.00px;height:12.73px;justify-content:flex-end;padding-right:10.5px;font-size:7px;">-</div>
<div class="t d" style="left:542.00px;top:241.46px;width:38.00px;height:12.73px;justify-content:flex-end;padding-right:1.5px;font-size:6.4px;">0.00%</div>
<div class="t d" style="left:392.00px;top:254.19px;width:41.00px;height:12.73px;justify-content:center;font-size:7.0px;">Feb-26</div>
<div class="t g" style="left:433.00px;top:254.19px;width:69.00px;height:12.73px;justify-content:flex-end;padding-right:10.5px;font-size:7px;">-</div>
<div class="t d" style="left:542.00px;top:254.19px;width:38.00px;height:12.73px;justify-content:flex-end;padding-right:1.5px;font-size:6.4px;">0.00%</div>
<div class="t d" style="left:392.00px;top:266.92px;width:41.00px;height:12.73px;justify-content:center;font-size:7.0px;">Feb-26</div>
<div class="t g" style="left:433.00px;top:266.92px;width:69.00px;height:12.73px;justify-content:flex-end;padding-right:10.5px;font-size:7px;">-</div>
<div class="t d" style="left:542.00px;top:266.92px;width:38.00px;height:12.73px;justify-content:flex-end;padding-right:1.5px;font-size:6.4px;">0.00%</div>
<div class="t b" style="left:433.00px;top:279.65px;width:69.00px;height:12.73px;justify-content:flex-end;padding-right:3.5px;font-size:6.4px;">50,000</div>
<div class="t b" style="left:502.00px;top:279.65px;width:40.00px;height:12.73px;justify-content:center;font-size:6.4px;">50,000</div>
<div class="t b" style="left:542.00px;top:279.65px;width:38.00px;height:12.73px;justify-content:flex-end;padding-right:1.5px;font-size:6.4px;">100.00%</div>
<div class="a" style="left:593.00px;top:216.00px;width:182.00px;height:76.38px;background:#d9d9d9"></div>
<div class="a" style="left:593.00px;top:227.93px;width:182.00px;height:1.60px;background:#ebebeb"></div>
<div class="a" style="left:593.00px;top:240.66px;width:182.00px;height:1.60px;background:#ebebeb"></div>
<div class="a" style="left:593.00px;top:253.39px;width:182.00px;height:1.60px;background:#ebebeb"></div>
<div class="a" style="left:593.00px;top:266.12px;width:182.00px;height:1.60px;background:#ebebeb"></div>
<div class="a" style="left:593.00px;top:278.85px;width:182.00px;height:1.60px;background:#ebebeb"></div>
<div class="a" style="left:630.20px;top:216.00px;width:1.60px;height:76.38px;background:#ebebeb"></div>
<div class="a" style="left:697.20px;top:216.00px;width:1.60px;height:76.38px;background:#ebebeb"></div>
<div class="a" style="left:735.20px;top:216.00px;width:1.60px;height:76.38px;background:#ebebeb"></div>
<div class="t d" style="left:593.00px;top:216.00px;width:38.00px;height:12.73px;justify-content:center;font-size:7.0px;">Jun-26</div>
<div class="t d" style="left:631.00px;top:216.00px;width:67.00px;height:12.73px;justify-content:flex-end;padding-right:3.5px;font-size:6.4px;">50,000</div>
<div class="t d" style="left:698.00px;top:216.00px;width:38.00px;height:12.73px;justify-content:center;font-size:6.4px;">50,000</div>
<div class="t d" style="left:736.00px;top:216.00px;width:39.00px;height:12.73px;justify-content:flex-end;padding-right:1.5px;font-size:6.4px;">100.00%</div>
<div class="t d" style="left:593.00px;top:228.73px;width:38.00px;height:12.73px;justify-content:center;font-size:7.0px;">Jul-26</div>
<div class="t g" style="left:631.00px;top:228.73px;width:67.00px;height:12.73px;justify-content:flex-end;padding-right:12.5px;font-size:7px;">-</div>
<div class="t d" style="left:736.00px;top:228.73px;width:39.00px;height:12.73px;justify-content:flex-end;padding-right:1.5px;font-size:6.4px;">0.00%</div>
<div class="t d" style="left:593.00px;top:241.46px;width:38.00px;height:12.73px;justify-content:center;font-size:7.0px;">Jul-26</div>
<div class="t g" style="left:631.00px;top:241.46px;width:67.00px;height:12.73px;justify-content:flex-end;padding-right:12.5px;font-size:7px;">-</div>
<div class="t d" style="left:736.00px;top:241.46px;width:39.00px;height:12.73px;justify-content:flex-end;padding-right:1.5px;font-size:6.4px;">0.00%</div>
<div class="t d" style="left:593.00px;top:254.19px;width:38.00px;height:12.73px;justify-content:center;font-size:7.0px;">Jul-26</div>
<div class="t g" style="left:631.00px;top:254.19px;width:67.00px;height:12.73px;justify-content:flex-end;padding-right:12.5px;font-size:7px;">-</div>
<div class="t d" style="left:736.00px;top:254.19px;width:39.00px;height:12.73px;justify-content:flex-end;padding-right:1.5px;font-size:6.4px;">0.00%</div>
<div class="t d" style="left:593.00px;top:266.92px;width:38.00px;height:12.73px;justify-content:center;font-size:7.0px;">Jul-26</div>
<div class="t g" style="left:631.00px;top:266.92px;width:67.00px;height:12.73px;justify-content:flex-end;padding-right:12.5px;font-size:7px;">-</div>
<div class="t d" style="left:736.00px;top:266.92px;width:39.00px;height:12.73px;justify-content:flex-end;padding-right:1.5px;font-size:6.4px;">0.00%</div>
<div class="t b" style="left:631.00px;top:279.65px;width:67.00px;height:12.73px;justify-content:flex-end;padding-right:3.5px;font-size:6.4px;">50,000</div>
<div class="t b" style="left:698.00px;top:279.65px;width:38.00px;height:12.73px;justify-content:center;font-size:6.4px;">50,000</div>
<div class="t b" style="left:736.00px;top:279.65px;width:39.00px;height:12.73px;justify-content:flex-end;padding-right:1.5px;font-size:6.4px;">100.00%</div>
<div class="a" style="left:785.00px;top:216.00px;width:184.00px;height:76.38px;background:#d9d9d9"></div>
<div class="a" style="left:785.00px;top:227.93px;width:184.00px;height:1.60px;background:#ebebeb"></div>
<div class="a" style="left:785.00px;top:240.66px;width:184.00px;height:1.60px;background:#ebebeb"></div>
<div class="a" style="left:785.00px;top:253.39px;width:184.00px;height:1.60px;background:#ebebeb"></div>
<div class="a" style="left:785.00px;top:266.12px;width:184.00px;height:1.60px;background:#ebebeb"></div>
<div class="a" style="left:785.00px;top:278.85px;width:184.00px;height:1.60px;background:#ebebeb"></div>
<div class="a" style="left:824.20px;top:216.00px;width:1.60px;height:76.38px;background:#ebebeb"></div>
<div class="a" style="left:883.20px;top:216.00px;width:1.60px;height:76.38px;background:#ebebeb"></div>
<div class="a" style="left:929.20px;top:216.00px;width:1.60px;height:76.38px;background:#ebebeb"></div>
<div class="t d" style="left:785.00px;top:216.00px;width:40.00px;height:12.73px;justify-content:center;font-size:7.0px;">Jul-27</div>
<div class="t d" style="left:825.00px;top:216.00px;width:59.00px;height:12.73px;justify-content:flex-end;padding-right:3.5px;font-size:6.4px;">60,000</div>
<div class="t d" style="left:884.00px;top:216.00px;width:46.00px;height:12.73px;justify-content:center;font-size:6.4px;">60,000</div>
<div class="t d" style="left:930.00px;top:216.00px;width:39.00px;height:12.73px;justify-content:flex-end;padding-right:1.5px;font-size:6.4px;">100.00%</div>
<div class="t d" style="left:785.00px;top:228.73px;width:40.00px;height:12.73px;justify-content:center;font-size:7.0px;">Jul-27</div>
<div class="t g" style="left:825.00px;top:228.73px;width:59.00px;height:12.73px;justify-content:flex-end;padding-right:10px;font-size:7px;">-</div>
<div class="t d" style="left:930.00px;top:228.73px;width:39.00px;height:12.73px;justify-content:flex-end;padding-right:1.5px;font-size:6.4px;">0.00%</div>
<div class="t d" style="left:785.00px;top:241.46px;width:40.00px;height:12.73px;justify-content:center;font-size:7.0px;">Aug-27</div>
<div class="t g" style="left:825.00px;top:241.46px;width:59.00px;height:12.73px;justify-content:flex-end;padding-right:10px;font-size:7px;">-</div>
<div class="t d" style="left:930.00px;top:241.46px;width:39.00px;height:12.73px;justify-content:flex-end;padding-right:1.5px;font-size:6.4px;">0.00%</div>
<div class="t d" style="left:785.00px;top:254.19px;width:40.00px;height:12.73px;justify-content:center;font-size:7.0px;">Aug-27</div>
<div class="t g" style="left:825.00px;top:254.19px;width:59.00px;height:12.73px;justify-content:flex-end;padding-right:10px;font-size:7px;">-</div>
<div class="t d" style="left:930.00px;top:254.19px;width:39.00px;height:12.73px;justify-content:flex-end;padding-right:1.5px;font-size:6.4px;">0.00%</div>
<div class="t d" style="left:785.00px;top:266.92px;width:40.00px;height:12.73px;justify-content:center;font-size:7.0px;">Aug-27</div>
<div class="t g" style="left:825.00px;top:266.92px;width:59.00px;height:12.73px;justify-content:flex-end;padding-right:10px;font-size:7px;">-</div>
<div class="t d" style="left:930.00px;top:266.92px;width:39.00px;height:12.73px;justify-content:flex-end;padding-right:1.5px;font-size:6.4px;">0.00%</div>
<div class="t b" style="left:825.00px;top:279.65px;width:59.00px;height:12.73px;justify-content:flex-end;padding-right:3.5px;font-size:6.4px;">60,000</div>
<div class="t b" style="left:884.00px;top:279.65px;width:46.00px;height:12.73px;justify-content:center;font-size:6.4px;">60,000</div>
<div class="t b" style="left:930.00px;top:279.65px;width:39.00px;height:12.73px;justify-content:flex-end;padding-right:1.5px;font-size:6.4px;">100.00%</div>
<div class="a" style="left:392.00px;top:305.11px;width:188.00px;height:76.38px;background:#d9d9d9"></div>
<div class="a" style="left:392.00px;top:317.04px;width:188.00px;height:1.60px;background:#ebebeb"></div>
<div class="a" style="left:392.00px;top:329.77px;width:188.00px;height:1.60px;background:#ebebeb"></div>
<div class="a" style="left:392.00px;top:342.50px;width:188.00px;height:1.60px;background:#ebebeb"></div>
<div class="a" style="left:392.00px;top:355.23px;width:188.00px;height:1.60px;background:#ebebeb"></div>
<div class="a" style="left:392.00px;top:367.96px;width:188.00px;height:1.60px;background:#ebebeb"></div>
<div class="a" style="left:432.20px;top:305.11px;width:1.60px;height:76.38px;background:#ebebeb"></div>
<div class="a" style="left:501.20px;top:305.11px;width:1.60px;height:76.38px;background:#ebebeb"></div>
<div class="a" style="left:541.20px;top:305.11px;width:1.60px;height:76.38px;background:#ebebeb"></div>
<div class="t d" style="left:392.00px;top:305.11px;width:41.00px;height:12.73px;justify-content:center;font-size:7.0px;">Jan-26</div>
<div class="t g" style="left:433.00px;top:305.11px;width:69.00px;height:12.73px;justify-content:flex-end;padding-right:10.5px;font-size:7px;">-</div>
<div class="t d" style="left:542.00px;top:305.11px;width:38.00px;height:12.73px;justify-content:flex-end;padding-right:1.5px;font-size:6.4px;">0.00%</div>
<div class="t d" style="left:392.00px;top:317.84px;width:41.00px;height:12.73px;justify-content:center;font-size:7.0px;">Feb-26</div>
<div class="t g" style="left:433.00px;top:317.84px;width:69.00px;height:12.73px;justify-content:flex-end;padding-right:10.5px;font-size:7px;">-</div>
<div class="t d" style="left:542.00px;top:317.84px;width:38.00px;height:12.73px;justify-content:flex-end;padding-right:1.5px;font-size:6.4px;">0.00%</div>
<div class="t d" style="left:392.00px;top:330.57px;width:41.00px;height:12.73px;justify-content:center;font-size:7.0px;">Feb-26</div>
<div class="t g" style="left:433.00px;top:330.57px;width:69.00px;height:12.73px;justify-content:flex-end;padding-right:10.5px;font-size:7px;">-</div>
<div class="t d" style="left:542.00px;top:330.57px;width:38.00px;height:12.73px;justify-content:flex-end;padding-right:1.5px;font-size:6.4px;">0.00%</div>
<div class="t d" style="left:392.00px;top:343.30px;width:41.00px;height:12.73px;justify-content:center;font-size:7.0px;">Feb-26</div>
<div class="t g" style="left:433.00px;top:343.30px;width:69.00px;height:12.73px;justify-content:flex-end;padding-right:10.5px;font-size:7px;">-</div>
<div class="t d" style="left:542.00px;top:343.30px;width:38.00px;height:12.73px;justify-content:flex-end;padding-right:1.5px;font-size:6.4px;">0.00%</div>
<div class="t d" style="left:392.00px;top:356.03px;width:41.00px;height:12.73px;justify-content:center;font-size:7.0px;">Feb-26</div>
<div class="t g" style="left:433.00px;top:356.03px;width:69.00px;height:12.73px;justify-content:flex-end;padding-right:10.5px;font-size:7px;">-</div>
<div class="t d" style="left:542.00px;top:356.03px;width:38.00px;height:12.73px;justify-content:flex-end;padding-right:1.5px;font-size:6.4px;">0.00%</div>
<div class="t g" style="left:433.00px;top:368.76px;width:69.00px;height:12.73px;justify-content:flex-end;padding-right:10.5px;font-size:7px;">-</div>
<div class="t g" style="left:502.00px;top:368.76px;width:40.00px;height:12.73px;justify-content:flex-end;padding-right:3.5px;font-size:6.4px;">0</div>
<div class="t b" style="left:542.00px;top:368.76px;width:38.00px;height:12.73px;justify-content:flex-end;padding-right:1.5px;font-size:6.4px;">0.00%</div>
<div class="a" style="left:593.00px;top:305.11px;width:182.00px;height:76.38px;background:#d9d9d9"></div>
<div class="a" style="left:593.00px;top:317.04px;width:182.00px;height:1.60px;background:#ebebeb"></div>
<div class="a" style="left:593.00px;top:329.77px;width:182.00px;height:1.60px;background:#ebebeb"></div>
<div class="a" style="left:593.00px;top:342.50px;width:182.00px;height:1.60px;background:#ebebeb"></div>
<div class="a" style="left:593.00px;top:355.23px;width:182.00px;height:1.60px;background:#ebebeb"></div>
<div class="a" style="left:593.00px;top:367.96px;width:182.00px;height:1.60px;background:#ebebeb"></div>
<div class="a" style="left:630.20px;top:305.11px;width:1.60px;height:76.38px;background:#ebebeb"></div>
<div class="a" style="left:697.20px;top:305.11px;width:1.60px;height:76.38px;background:#ebebeb"></div>
<div class="a" style="left:735.20px;top:305.11px;width:1.60px;height:76.38px;background:#ebebeb"></div>
<div class="t d" style="left:593.00px;top:305.11px;width:38.00px;height:12.73px;justify-content:center;font-size:7.0px;">Jun-26</div>
<div class="t g" style="left:631.00px;top:305.11px;width:67.00px;height:12.73px;justify-content:flex-end;padding-right:12.5px;font-size:7px;">-</div>
<div class="t d" style="left:736.00px;top:305.11px;width:39.00px;height:12.73px;justify-content:flex-end;padding-right:1.5px;font-size:6.4px;">0.00%</div>
<div class="t d" style="left:593.00px;top:317.84px;width:38.00px;height:12.73px;justify-content:center;font-size:7.0px;">Jul-26</div>
<div class="t g" style="left:631.00px;top:317.84px;width:67.00px;height:12.73px;justify-content:flex-end;padding-right:12.5px;font-size:7px;">-</div>
<div class="t d" style="left:736.00px;top:317.84px;width:39.00px;height:12.73px;justify-content:flex-end;padding-right:1.5px;font-size:6.4px;">0.00%</div>
<div class="t d" style="left:593.00px;top:330.57px;width:38.00px;height:12.73px;justify-content:center;font-size:7.0px;">Jul-26</div>
<div class="t g" style="left:631.00px;top:330.57px;width:67.00px;height:12.73px;justify-content:flex-end;padding-right:12.5px;font-size:7px;">-</div>
<div class="t d" style="left:736.00px;top:330.57px;width:39.00px;height:12.73px;justify-content:flex-end;padding-right:1.5px;font-size:6.4px;">0.00%</div>
<div class="t d" style="left:593.00px;top:343.30px;width:38.00px;height:12.73px;justify-content:center;font-size:7.0px;">Jul-26</div>
<div class="t g" style="left:631.00px;top:343.30px;width:67.00px;height:12.73px;justify-content:flex-end;padding-right:12.5px;font-size:7px;">-</div>
<div class="t d" style="left:736.00px;top:343.30px;width:39.00px;height:12.73px;justify-content:flex-end;padding-right:1.5px;font-size:6.4px;">0.00%</div>
<div class="t d" style="left:593.00px;top:356.03px;width:38.00px;height:12.73px;justify-content:center;font-size:7.0px;">Jul-26</div>
<div class="t g" style="left:631.00px;top:356.03px;width:67.00px;height:12.73px;justify-content:flex-end;padding-right:12.5px;font-size:7px;">-</div>
<div class="t d" style="left:736.00px;top:356.03px;width:39.00px;height:12.73px;justify-content:flex-end;padding-right:1.5px;font-size:6.4px;">0.00%</div>
<div class="t g" style="left:631.00px;top:368.76px;width:67.00px;height:12.73px;justify-content:flex-end;padding-right:12.5px;font-size:7px;">-</div>
<div class="t g" style="left:698.00px;top:368.76px;width:38.00px;height:12.73px;justify-content:flex-end;padding-right:3.5px;font-size:6.4px;">0</div>
<div class="t b" style="left:736.00px;top:368.76px;width:39.00px;height:12.73px;justify-content:flex-end;padding-right:1.5px;font-size:6.4px;">0.00%</div>
<div class="a" style="left:593.00px;top:394.22px;width:182.00px;height:76.38px;background:#d9d9d9"></div>
<div class="a" style="left:593.00px;top:406.15px;width:182.00px;height:1.60px;background:#ebebeb"></div>
<div class="a" style="left:593.00px;top:418.88px;width:182.00px;height:1.60px;background:#ebebeb"></div>
<div class="a" style="left:593.00px;top:431.61px;width:182.00px;height:1.60px;background:#ebebeb"></div>
<div class="a" style="left:593.00px;top:444.34px;width:182.00px;height:1.60px;background:#ebebeb"></div>
<div class="a" style="left:593.00px;top:457.07px;width:182.00px;height:1.60px;background:#ebebeb"></div>
<div class="a" style="left:630.20px;top:394.22px;width:1.60px;height:76.38px;background:#ebebeb"></div>
<div class="a" style="left:697.20px;top:394.22px;width:1.60px;height:76.38px;background:#ebebeb"></div>
<div class="a" style="left:735.20px;top:394.22px;width:1.60px;height:76.38px;background:#ebebeb"></div>
<div class="t d" style="left:593.00px;top:394.22px;width:38.00px;height:12.73px;justify-content:center;font-size:7.0px;">Jun-26</div>
<div class="t g" style="left:631.00px;top:394.22px;width:67.00px;height:12.73px;justify-content:flex-end;padding-right:12.5px;font-size:7px;">-</div>
<div class="t d" style="left:736.00px;top:394.22px;width:39.00px;height:12.73px;justify-content:flex-end;padding-right:1.5px;font-size:6.4px;">0.00%</div>
<div class="t d" style="left:593.00px;top:406.95px;width:38.00px;height:12.73px;justify-content:center;font-size:7.0px;">Jul-26</div>
<div class="t g" style="left:631.00px;top:406.95px;width:67.00px;height:12.73px;justify-content:flex-end;padding-right:12.5px;font-size:7px;">-</div>
<div class="t d" style="left:736.00px;top:406.95px;width:39.00px;height:12.73px;justify-content:flex-end;padding-right:1.5px;font-size:6.4px;">0.00%</div>
<div class="t d" style="left:593.00px;top:419.68px;width:38.00px;height:12.73px;justify-content:center;font-size:7.0px;">Jul-26</div>
<div class="t g" style="left:631.00px;top:419.68px;width:67.00px;height:12.73px;justify-content:flex-end;padding-right:12.5px;font-size:7px;">-</div>
<div class="t d" style="left:736.00px;top:419.68px;width:39.00px;height:12.73px;justify-content:flex-end;padding-right:1.5px;font-size:6.4px;">0.00%</div>
<div class="t d" style="left:593.00px;top:432.41px;width:38.00px;height:12.73px;justify-content:center;font-size:7.0px;">Jul-26</div>
<div class="t g" style="left:631.00px;top:432.41px;width:67.00px;height:12.73px;justify-content:flex-end;padding-right:12.5px;font-size:7px;">-</div>
<div class="t d" style="left:736.00px;top:432.41px;width:39.00px;height:12.73px;justify-content:flex-end;padding-right:1.5px;font-size:6.4px;">0.00%</div>
<div class="t d" style="left:593.00px;top:445.14px;width:38.00px;height:12.73px;justify-content:center;font-size:7.0px;">Jul-26</div>
<div class="t g" style="left:631.00px;top:445.14px;width:67.00px;height:12.73px;justify-content:flex-end;padding-right:12.5px;font-size:7px;">-</div>
<div class="t d" style="left:736.00px;top:445.14px;width:39.00px;height:12.73px;justify-content:flex-end;padding-right:1.5px;font-size:6.4px;">0.00%</div>
<div class="t g" style="left:631.00px;top:457.87px;width:67.00px;height:12.73px;justify-content:flex-end;padding-right:12.5px;font-size:7px;">-</div>
<div class="t g" style="left:698.00px;top:457.87px;width:38.00px;height:12.73px;justify-content:flex-end;padding-right:3.5px;font-size:6.4px;">0</div>
<div class="t b" style="left:736.00px;top:457.87px;width:39.00px;height:12.73px;justify-content:flex-end;padding-right:1.5px;font-size:6.4px;">0.00%</div>
<div class="a" style="left:785.00px;top:305.11px;width:184.00px;height:76.38px;background:#d9d9d9"></div>
<div class="a" style="left:785.00px;top:317.04px;width:184.00px;height:1.60px;background:#ebebeb"></div>
<div class="a" style="left:785.00px;top:329.77px;width:184.00px;height:1.60px;background:#ebebeb"></div>
<div class="a" style="left:785.00px;top:342.50px;width:184.00px;height:1.60px;background:#ebebeb"></div>
<div class="a" style="left:785.00px;top:355.23px;width:184.00px;height:1.60px;background:#ebebeb"></div>
<div class="a" style="left:785.00px;top:367.96px;width:184.00px;height:1.60px;background:#ebebeb"></div>
<div class="a" style="left:824.20px;top:305.11px;width:1.60px;height:76.38px;background:#ebebeb"></div>
<div class="a" style="left:883.20px;top:305.11px;width:1.60px;height:76.38px;background:#ebebeb"></div>
<div class="a" style="left:929.20px;top:305.11px;width:1.60px;height:76.38px;background:#ebebeb"></div>
<div class="t d" style="left:785.00px;top:305.11px;width:40.00px;height:12.73px;justify-content:center;font-size:7.0px;">Jul-27</div>
<div class="t g" style="left:825.00px;top:305.11px;width:59.00px;height:12.73px;justify-content:flex-end;padding-right:10px;font-size:7px;">-</div>
<div class="t d" style="left:930.00px;top:305.11px;width:39.00px;height:12.73px;justify-content:flex-end;padding-right:1.5px;font-size:6.4px;">0.00%</div>
<div class="t d" style="left:785.00px;top:317.84px;width:40.00px;height:12.73px;justify-content:center;font-size:7.0px;">Jul-27</div>
<div class="t g" style="left:825.00px;top:317.84px;width:59.00px;height:12.73px;justify-content:flex-end;padding-right:10px;font-size:7px;">-</div>
<div class="t d" style="left:930.00px;top:317.84px;width:39.00px;height:12.73px;justify-content:flex-end;padding-right:1.5px;font-size:6.4px;">0.00%</div>
<div class="t d" style="left:785.00px;top:330.57px;width:40.00px;height:12.73px;justify-content:center;font-size:7.0px;">Aug-27</div>
<div class="t g" style="left:825.00px;top:330.57px;width:59.00px;height:12.73px;justify-content:flex-end;padding-right:10px;font-size:7px;">-</div>
<div class="t d" style="left:930.00px;top:330.57px;width:39.00px;height:12.73px;justify-content:flex-end;padding-right:1.5px;font-size:6.4px;">0.00%</div>
<div class="t d" style="left:785.00px;top:343.30px;width:40.00px;height:12.73px;justify-content:center;font-size:7.0px;">Aug-27</div>
<div class="t g" style="left:825.00px;top:343.30px;width:59.00px;height:12.73px;justify-content:flex-end;padding-right:10px;font-size:7px;">-</div>
<div class="t d" style="left:930.00px;top:343.30px;width:39.00px;height:12.73px;justify-content:flex-end;padding-right:1.5px;font-size:6.4px;">0.00%</div>
<div class="t d" style="left:785.00px;top:356.03px;width:40.00px;height:12.73px;justify-content:center;font-size:7.0px;">Aug-27</div>
<div class="t g" style="left:825.00px;top:356.03px;width:59.00px;height:12.73px;justify-content:flex-end;padding-right:10px;font-size:7px;">-</div>
<div class="t d" style="left:930.00px;top:356.03px;width:39.00px;height:12.73px;justify-content:flex-end;padding-right:1.5px;font-size:6.4px;">0.00%</div>
<div class="t g" style="left:825.00px;top:368.76px;width:59.00px;height:12.73px;justify-content:flex-end;padding-right:10px;font-size:7px;">-</div>
<div class="t g" style="left:884.00px;top:368.76px;width:46.00px;height:12.73px;justify-content:flex-end;padding-right:3.5px;font-size:6.4px;">0</div>
<div class="t b" style="left:930.00px;top:368.76px;width:39.00px;height:12.73px;justify-content:flex-end;padding-right:1.5px;font-size:6.4px;">0.00%</div>
<div class="a" style="left:785.00px;top:394.22px;width:184.00px;height:76.38px;background:#d9d9d9"></div>
<div class="a" style="left:785.00px;top:406.15px;width:184.00px;height:1.60px;background:#ebebeb"></div>
<div class="a" style="left:785.00px;top:418.88px;width:184.00px;height:1.60px;background:#ebebeb"></div>
<div class="a" style="left:785.00px;top:431.61px;width:184.00px;height:1.60px;background:#ebebeb"></div>
<div class="a" style="left:785.00px;top:444.34px;width:184.00px;height:1.60px;background:#ebebeb"></div>
<div class="a" style="left:785.00px;top:457.07px;width:184.00px;height:1.60px;background:#ebebeb"></div>
<div class="a" style="left:824.20px;top:394.22px;width:1.60px;height:76.38px;background:#ebebeb"></div>
<div class="a" style="left:883.20px;top:394.22px;width:1.60px;height:76.38px;background:#ebebeb"></div>
<div class="a" style="left:929.20px;top:394.22px;width:1.60px;height:76.38px;background:#ebebeb"></div>
<div class="t d" style="left:785.00px;top:394.22px;width:40.00px;height:12.73px;justify-content:center;font-size:7.0px;">Jul-27</div>
<div class="t g" style="left:825.00px;top:394.22px;width:59.00px;height:12.73px;justify-content:flex-end;padding-right:10px;font-size:7px;">-</div>
<div class="t g2" style="left:884.00px;top:394.22px;width:46.00px;height:12.73px;justify-content:center;font-size:6.4px;">0</div>
<div class="t d" style="left:930.00px;top:394.22px;width:39.00px;height:12.73px;justify-content:flex-end;padding-right:1.5px;font-size:6.4px;">0.00%</div>
<div class="t d" style="left:785.00px;top:406.95px;width:40.00px;height:12.73px;justify-content:center;font-size:7.0px;">Jul-27</div>
<div class="t g" style="left:825.00px;top:406.95px;width:59.00px;height:12.73px;justify-content:flex-end;padding-right:10px;font-size:7px;">-</div>
<div class="t g2" style="left:884.00px;top:406.95px;width:46.00px;height:12.73px;justify-content:center;font-size:6.4px;">0</div>
<div class="t d" style="left:930.00px;top:406.95px;width:39.00px;height:12.73px;justify-content:flex-end;padding-right:1.5px;font-size:6.4px;">0.00%</div>
<div class="t d" style="left:785.00px;top:419.68px;width:40.00px;height:12.73px;justify-content:center;font-size:7.0px;">Aug-27</div>
<div class="t g" style="left:825.00px;top:419.68px;width:59.00px;height:12.73px;justify-content:flex-end;padding-right:10px;font-size:7px;">-</div>
<div class="t g2" style="left:884.00px;top:419.68px;width:46.00px;height:12.73px;justify-content:center;font-size:6.4px;">0</div>
<div class="t d" style="left:930.00px;top:419.68px;width:39.00px;height:12.73px;justify-content:flex-end;padding-right:1.5px;font-size:6.4px;">0.00%</div>
<div class="t d" style="left:785.00px;top:432.41px;width:40.00px;height:12.73px;justify-content:center;font-size:7.0px;">Aug-27</div>
<div class="t g" style="left:825.00px;top:432.41px;width:59.00px;height:12.73px;justify-content:flex-end;padding-right:10px;font-size:7px;">-</div>
<div class="t g2" style="left:884.00px;top:432.41px;width:46.00px;height:12.73px;justify-content:center;font-size:6.4px;">0</div>
<div class="t d" style="left:930.00px;top:432.41px;width:39.00px;height:12.73px;justify-content:flex-end;padding-right:1.5px;font-size:6.4px;">0.00%</div>
<div class="t d" style="left:785.00px;top:445.14px;width:40.00px;height:12.73px;justify-content:center;font-size:7.0px;">Aug-27</div>
<div class="t g" style="left:825.00px;top:445.14px;width:59.00px;height:12.73px;justify-content:flex-end;padding-right:10px;font-size:7px;">-</div>
<div class="t g2" style="left:884.00px;top:445.14px;width:46.00px;height:12.73px;justify-content:center;font-size:6.4px;">0</div>
<div class="t d" style="left:930.00px;top:445.14px;width:39.00px;height:12.73px;justify-content:flex-end;padding-right:1.5px;font-size:6.4px;">0.00%</div>
<div class="t g" style="left:825.00px;top:457.87px;width:59.00px;height:12.73px;justify-content:flex-end;padding-right:10px;font-size:7px;">-</div>
<div class="t g" style="left:884.00px;top:457.87px;width:46.00px;height:12.73px;justify-content:flex-end;padding-right:3.5px;font-size:6.4px;">0</div>
<div class="t b" style="left:930.00px;top:457.87px;width:39.00px;height:12.73px;justify-content:flex-end;padding-right:1.5px;font-size:6.4px;">0.00%</div>
<div class="a" style="left:785.00px;top:483.33px;width:184.00px;height:76.38px;background:#d9d9d9"></div>
<div class="a" style="left:785.00px;top:495.26px;width:184.00px;height:1.60px;background:#ebebeb"></div>
<div class="a" style="left:785.00px;top:507.99px;width:184.00px;height:1.60px;background:#ebebeb"></div>
<div class="a" style="left:785.00px;top:520.72px;width:184.00px;height:1.60px;background:#ebebeb"></div>
<div class="a" style="left:785.00px;top:533.45px;width:184.00px;height:1.60px;background:#ebebeb"></div>
<div class="a" style="left:785.00px;top:546.18px;width:184.00px;height:1.60px;background:#ebebeb"></div>
<div class="a" style="left:824.20px;top:483.33px;width:1.60px;height:76.38px;background:#ebebeb"></div>
<div class="a" style="left:883.20px;top:483.33px;width:1.60px;height:76.38px;background:#ebebeb"></div>
<div class="a" style="left:929.20px;top:483.33px;width:1.60px;height:76.38px;background:#ebebeb"></div>
<div class="t d" style="left:785.00px;top:483.33px;width:40.00px;height:12.73px;justify-content:center;font-size:7.0px;">Jul-27</div>
<div class="t g" style="left:825.00px;top:483.33px;width:59.00px;height:12.73px;justify-content:flex-end;padding-right:10px;font-size:7px;">-</div>
<div class="t d" style="left:930.00px;top:483.33px;width:39.00px;height:12.73px;justify-content:flex-end;padding-right:1.5px;font-size:6.4px;">0.00%</div>
<div class="t d" style="left:785.00px;top:496.06px;width:40.00px;height:12.73px;justify-content:center;font-size:7.0px;">Jul-27</div>
<div class="t g" style="left:825.00px;top:496.06px;width:59.00px;height:12.73px;justify-content:flex-end;padding-right:10px;font-size:7px;">-</div>
<div class="t d" style="left:930.00px;top:496.06px;width:39.00px;height:12.73px;justify-content:flex-end;padding-right:1.5px;font-size:6.4px;">0.00%</div>
<div class="t d" style="left:785.00px;top:508.79px;width:40.00px;height:12.73px;justify-content:center;font-size:7.0px;">Aug-27</div>
<div class="t g" style="left:825.00px;top:508.79px;width:59.00px;height:12.73px;justify-content:flex-end;padding-right:10px;font-size:7px;">-</div>
<div class="t d" style="left:930.00px;top:508.79px;width:39.00px;height:12.73px;justify-content:flex-end;padding-right:1.5px;font-size:6.4px;">0.00%</div>
<div class="t d" style="left:785.00px;top:521.52px;width:40.00px;height:12.73px;justify-content:center;font-size:7.0px;">Aug-27</div>
<div class="t g" style="left:825.00px;top:521.52px;width:59.00px;height:12.73px;justify-content:flex-end;padding-right:10px;font-size:7px;">-</div>
<div class="t d" style="left:930.00px;top:521.52px;width:39.00px;height:12.73px;justify-content:flex-end;padding-right:1.5px;font-size:6.4px;">0.00%</div>
<div class="t d" style="left:785.00px;top:534.25px;width:40.00px;height:12.73px;justify-content:center;font-size:7.0px;">Aug-27</div>
<div class="t g" style="left:825.00px;top:534.25px;width:59.00px;height:12.73px;justify-content:flex-end;padding-right:10px;font-size:7px;">-</div>
<div class="t d" style="left:930.00px;top:534.25px;width:39.00px;height:12.73px;justify-content:flex-end;padding-right:1.5px;font-size:6.4px;">0.00%</div>
<div class="t g" style="left:825.00px;top:546.98px;width:59.00px;height:12.73px;justify-content:flex-end;padding-right:10px;font-size:7px;">-</div>
<div class="t g" style="left:884.00px;top:546.98px;width:46.00px;height:12.73px;justify-content:flex-end;padding-right:3.5px;font-size:6.4px;">0</div>
<div class="t b" style="left:930.00px;top:546.98px;width:39.00px;height:12.73px;justify-content:flex-end;padding-right:1.5px;font-size:6.4px;">0.00%</div>
<svg class="a" style="left:884.80px;top:394.82px" width="3" height="3" viewBox="0 0 3 3"><path d="M0 0 H3 L0 3 Z" fill="#1f1f1f"/></svg>
<svg class="a" style="left:884.80px;top:407.55px" width="3" height="3" viewBox="0 0 3 3"><path d="M0 0 H3 L0 3 Z" fill="#1f1f1f"/></svg>
<svg class="a" style="left:884.80px;top:420.28px" width="3" height="3" viewBox="0 0 3 3"><path d="M0 0 H3 L0 3 Z" fill="#1f1f1f"/></svg>
<svg class="a" style="left:884.80px;top:433.01px" width="3" height="3" viewBox="0 0 3 3"><path d="M0 0 H3 L0 3 Z" fill="#1e9e3a"/></svg>
<svg class="a" style="left:884.80px;top:445.74px" width="3" height="3" viewBox="0 0 3 3"><path d="M0 0 H3 L0 3 Z" fill="#1e9e3a"/></svg>
<div class="t g" style="left:785.00px;top:457.87px;width:40.00px;height:12.73px;justify-content:flex-start;padding-left:3px;font-size:6px;">3</div>
<div class="t g" style="left:785.00px;top:457.87px;width:40.00px;height:12.73px;justify-content:flex-start;padding-left:26px;font-size:6px;">-</div>
<div class="a" style="left:31.00px;top:68.50px;width:78.00px;height:16.00px;background:#f2f2f2"></div>
<div class="cap" style="left:33.5px;top:70px;width:75px;height:15px">Caps Table</div>
</div>
<div id="colhdr">
<div class="cn" style="left:17.5px;width:13.0px">A</div>
<div class="cn" style="left:30.5px;width:77.5px">B</div>
<div class="cn" style="left:108px;width:48px">C</div>
<div class="cn" style="left:156px;width:13px">D</div>
<div class="cn" style="left:169px;width:51px">E</div>
<div class="cn" style="left:220px;width:56px">F</div>
<div class="cn" style="left:276px;width:38px">G</div>
<div class="cn sel" style="left:314px;width:69px">H</div>
<div class="cn" style="left:383px;width:9px">I</div>
<div class="cn" style="left:392px;width:41px">J</div>
<div class="cn" style="left:433px;width:69px">K</div>
<div class="cn" style="left:502px;width:40px">L</div>
<div class="cn" style="left:542px;width:38px">M</div>
<div class="cn" style="left:580px;width:13px">N</div>
<div class="cn" style="left:593px;width:38px">O</div>
<div class="cn" style="left:631px;width:67px">P</div>
<div class="cn" style="left:698px;width:38px">Q</div>
<div class="cn" style="left:736px;width:39px">R</div>
<div class="cn" style="left:775px;width:10px">S</div>
<div class="cn" style="left:785px;width:40px">T</div>
<div class="cn" style="left:825px;width:59px">U</div>
<div class="cn" style="left:884px;width:46px">V</div>
<div class="cn" style="left:930px;width:39px">W</div>
<div class="cn" style="left:969px;width:41px"></div>
  <svg style="position:absolute;left:6px;top:5px" width="9" height="8" viewBox="0 0 9 8"><path d="M9 0 L9 8 L1 8 Z" fill="#bdbdbd"/></svg>
</div>
<div id="rowhdr">
<div class="rn" style="top:63.00px;height:6.00px">1</div>
<div class="rn" style="top:69.00px;height:15.20px">2</div>
<div class="rn" style="top:84.20px;height:12.90px">3</div>
<div class="rn" style="top:97.10px;height:12.90px">4</div>
<div class="rn" style="top:110.00px;height:12.50px">5</div>
<div class="rn" style="top:122.50px;height:12.50px">6</div>
<div class="rn" style="top:135.00px;height:12.50px">7</div>
<div class="rn" style="top:147.50px;height:12.50px">8</div>
<div class="rn" style="top:160.00px;height:12.50px">9</div>
<div class="rn" style="top:172.50px;height:13.00px">10</div>
<div class="rn" style="top:185.50px;height:12.80px">11</div>
<div class="rn" style="top:198.30px;height:17.70px">12</div>
<div class="rn" style="top:216.00px;height:12.73px">13</div>
<div class="rn" style="top:228.73px;height:12.73px">14</div>
<div class="rn" style="top:241.46px;height:12.73px">15</div>
<div class="rn" style="top:254.19px;height:12.73px">16</div>
<div class="rn" style="top:266.92px;height:12.73px">17</div>
<div class="rn" style="top:279.65px;height:12.73px">18</div>
<div class="rn" style="top:292.38px;height:12.73px">19</div>
<div class="rn" style="top:305.11px;height:12.73px">20</div>
<div class="rn" style="top:317.84px;height:12.73px">21</div>
<div class="rn" style="top:330.57px;height:12.73px">22</div>
<div class="rn" style="top:343.30px;height:12.73px">23</div>
<div class="rn" style="top:356.03px;height:12.73px">24</div>
<div class="rn" style="top:368.76px;height:12.73px">25</div>
<div class="rn" style="top:381.49px;height:12.73px">26</div>
<div class="rn" style="top:394.22px;height:12.73px">27</div>
<div class="rn" style="top:406.95px;height:12.73px">28</div>
<div class="rn" style="top:419.68px;height:12.73px">29</div>
<div class="rn" style="top:432.41px;height:12.73px">30</div>
<div class="rn" style="top:445.14px;height:12.73px">31</div>
<div class="rn" style="top:457.87px;height:12.73px">32</div>
<div class="rn" style="top:470.60px;height:12.73px">33</div>
<div class="rn" style="top:483.33px;height:12.73px">34</div>
<div class="rn" style="top:496.06px;height:12.73px">35</div>
<div class="rn" style="top:508.79px;height:12.73px">36</div>
<div class="rn" style="top:521.52px;height:12.73px">37</div>
<div class="rn" style="top:534.25px;height:12.73px">38</div>
<div class="rn" style="top:546.98px;height:12.73px">39</div>
</div>
<div id="vscroll">
  <svg style="position:absolute;left:2px;top:3px" width="7" height="6" viewBox="0 0 7 6"><path d="M0.5 5.5 L3.5 0.5 L6.5 5.5 Z" fill="#606060"/></svg>
  <div style="position:absolute;left:2px;top:11.5px;width:5.8px;height:402px;background:#717171;border-radius:1.5px"></div>
  <svg style="position:absolute;left:2px;top:501px" width="7" height="6" viewBox="0 0 7 6"><path d="M0.5 0.5 L3.5 5.5 L6.5 0.5 Z" fill="#606060"/></svg>
</div>
<svg style="position:absolute;left:982px;top:54px" width="5" height="7" viewBox="0 0 5 7"><path d="M1 0.8 L4 3.5 L1 6.2" fill="none" stroke="#404040" stroke-width="1"/></svg>
<div id="tabs">
  <svg style="position:absolute;left:16px;top:5px" width="5" height="8" viewBox="0 0 5 8"><path d="M4 1 L1 4 L4 7" fill="none" stroke="#8a8a8a" stroke-width="1"/></svg>
  <svg style="position:absolute;left:38px;top:5px" width="5" height="8" viewBox="0 0 5 8"><path d="M1 1 L4 4 L1 7" fill="none" stroke="#8a8a8a" stroke-width="1"/></svg>
  <div style="position:absolute;left:57px;top:8px;width:7px;height:2px;background:repeating-linear-gradient(90deg,#404040 0 1.5px,transparent 1.5px 2.7px)"></div>
  <div class="tab y" style="left:74px;width:42px">IS 2025</div>
  <div class="tab y" style="left:120.5px;width:42.5px">CF 2025</div>
  <div class="tab" style="left:168px;width:57px">DCF Model</div>
  <div class="tab" style="left:230px;top:0;width:59px;background:#ffffff;font-weight:bold;color:#1f1f1f;height:17px;line-height:15px">CAPS Table</div>
  <div style="position:absolute;left:236px;top:13px;width:47px;height:1.5px;background:#217346"></div>
  <div class="tab" style="left:293px;width:45px">BS 2025</div>
  <div class="tab" style="left:343px;width:122px">Statements Summary 2025</div>
  <div class="tab yy" style="left:470px;width:61px">CAPEX 2025</div>
  <div class="tab y" style="left:537.5px;width:54.5px">OPEX 2025</div>
  <div class="tab y" style="left:598.5px;width:91.5px">Service Inputs 2026</div>
  <div class="tab y" style="left:696px;width:60.7px">Inputs 2026</div>
  <div class="tab y" style="left:760px;width:41px">IS 2026</div>
  <div class="tab y" style="left:807.7px;width:44.3px">CF 2026</div>
  <div class="tab" style="left:857px;width:24px;overflow:hidden;text-align:left;padding-left:5px">BS 2026</div>
  <div style="position:absolute;left:885.5px;top:8px;width:7px;height:2px;background:repeating-linear-gradient(90deg,#404040 0 1.5px,transparent 1.5px 2.7px)"></div>
  <div style="position:absolute;left:907px;top:8.5px;width:8px;height:1px;background:#404040"></div>
  <div style="position:absolute;left:910.5px;top:5px;width:1px;height:8px;background:#404040"></div>
  <div style="position:absolute;left:931.5px;top:5px;width:1.2px;height:8px;background:repeating-linear-gradient(180deg,#505050 0 1.5px,transparent 1.5px 3.2px)"></div>
  <svg style="position:absolute;left:945px;top:6px" width="5" height="6" viewBox="0 0 5 6"><path d="M4.5 0.5 L0.5 3 L4.5 5.5 Z" fill="#505050"/></svg>
  <div style="position:absolute;left:954px;top:6.5px;width:22px;height:4.5px;background:#7a7a7a;border-radius:2.5px"></div>
  <svg style="position:absolute;left:981px;top:6px" width="5" height="6" viewBox="0 0 5 6"><path d="M0.5 0.5 L4.5 3 L0.5 5.5 Z" fill="#505050"/></svg>
</div>
<div id="status">
  <div class="st" style="left:7.5px">Ready</div>
  <svg style="position:absolute;left:40px;top:6px" width="9" height="9" viewBox="0 0 9 9"><rect x="0.5" y="0.5" width="8" height="8" fill="none" stroke="#555" stroke-width="1"/><path d="M0.5 3 H8.5 M3 3 V8.5" stroke="#555" stroke-width="0.8"/><circle cx="6" cy="6" r="1.5" fill="#555"/></svg>
  <svg style="position:absolute;left:60px;top:5.5px" width="10" height="10" viewBox="0 0 10 10"><path d="M1 2.5 H9 M5 1 V9 M2.5 2.5 L1 6 H4 Z M7.5 2.5 L6 6 H9 Z M3 9 H7" fill="none" stroke="#555" stroke-width="0.9"/></svg>
  <div class="st" style="left:72px;font-weight:bold;color:#303030">Accessibility: Investigate</div>
  <div style="position:absolute;left:811px;top:0;width:16px;height:14.5px;background:#dcdcdc"></div>
  <svg style="position:absolute;left:814px;top:4px" width="10" height="9" viewBox="0 0 10 9"><path d="M0.5 0.5 H9.5 V8.5 H0.5 Z M3.5 0.5 V8.5 M6.5 0.5 V8.5 M0.5 3.2 H9.5 M0.5 5.8 H9.5" fill="none" stroke="#505050" stroke-width="0.8"/></svg>
  <svg style="position:absolute;left:840px;top:4px" width="10" height="9" viewBox="0 0 10 9"><path d="M0.5 0.5 H9.5 V8.5 H0.5 Z M2 2 H8 V7 H2 Z M4 2 V7 M6 2 V7" fill="none" stroke="#505050" stroke-width="0.8"/></svg>
  <svg style="position:absolute;left:866px;top:4px" width="10" height="9" viewBox="0 0 10 9"><path d="M0.5 0.5 H9.5 V8.5 H0.5 Z M0.5 5 H5 V0.5" fill="none" stroke="#505050" stroke-width="0.8"/></svg>
  <div style="position:absolute;left:888px;top:8px;width:5px;height:1px;background:#606060"></div>
  <div style="position:absolute;left:896px;top:8px;width:68px;height:1px;background:#8a8a8a"></div>
  <div style="position:absolute;left:927.5px;top:5px;width:2.5px;height:7px;background:#404040"></div>
  <div style="position:absolute;left:964px;top:8px;width:5px;height:1px;background:#606060"></div>
  <div style="position:absolute;left:966px;top:6px;width:1px;height:5px;background:#606060"></div>
  <div class="st" style="left:979px;font-size:6.8px">100%</div>
</div>
</body></html>
